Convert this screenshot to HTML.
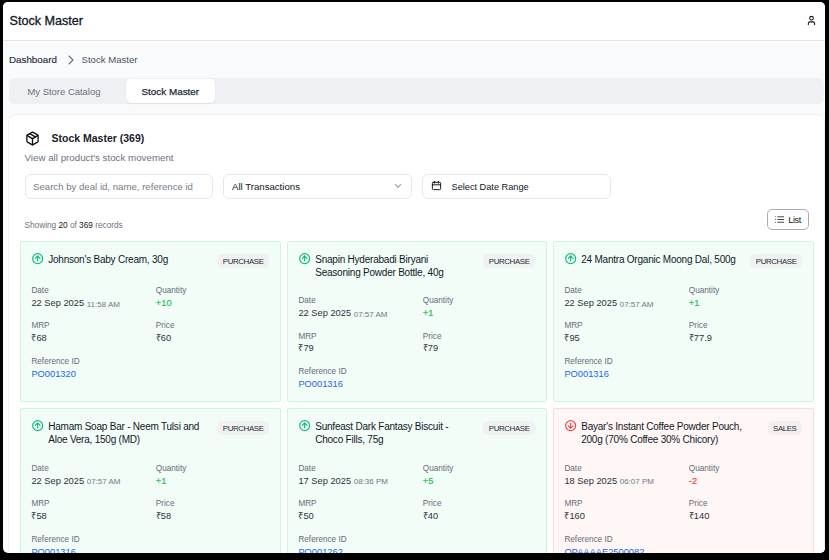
<!DOCTYPE html>
<html><head><meta charset="utf-8">
<style>
*{box-sizing:border-box;margin:0;padding:0}
html,body{width:829px;height:560px;overflow:hidden;background:#000}
body{font-family:"Liberation Sans",sans-serif;color:#111827;position:relative}
.win{position:absolute;left:3px;top:2px;width:822px;height:551px;background:#f8fafc;border-radius:5px;overflow:hidden}
.abs{position:absolute;white-space:nowrap}
svg{display:block}
.hdr{left:0;top:0;width:822px;height:39px;background:#fff;border-bottom:1px solid #e4e6ea}
.med{-webkit-text-stroke:0.3px currentColor}
.tabs{left:6px;top:76px;width:815px;height:26px;background:#eef0f3;border-radius:6px}
.act{left:123px;top:77px;width:89px;height:24px;background:#fff;border-radius:5px;box-shadow:0 1px 1.5px rgba(0,0,0,.07)}
.main{left:6px;top:113px;width:815px;height:460px;background:#fff;border-radius:8px;box-shadow:0 0 0 1px #f0f1f4}
.inp{top:172px;height:25px;border:1px solid #e5e7eb;border-radius:6px;background:#fff}
.card{position:absolute;height:161px;border:1px solid #cdf6e0;background:#f3fdf8;border-radius:2px}
.card.red{border-color:#fcdada;background:#fff6f6}
.card>*{position:absolute;white-space:nowrap}
.ic{left:10.6px;top:10.9px}
.nm{left:27.2px;top:11.4px;font-size:10px;letter-spacing:-.22px;line-height:13px;color:#111827}
.badge{right:11.5px;top:12.2px;height:14px;line-height:15.6px;padding:0 5px 0 5.5px;font-size:7.9px;letter-spacing:-.4px;background:#f0f2f2;border-radius:5px;color:#1f2937}
.red .badge{background:#f4efef}
.lb{font-size:8.2px;line-height:12px;color:#646b78}
.vl{font-size:9.3px;line-height:14px;color:#2b313c}
.tm{font-size:8px;color:#6f7683;position:relative;top:.8px}
.g{color:#1fbf5a;-webkit-text-stroke:.2px currentColor}.r{color:#ef4444;-webkit-text-stroke:.2px currentColor}.bl{color:#2563eb}

</style></head><body>
<div class="win">
  <div class="abs hdr"></div>
  <div class="abs med" style="left:6.5px;top:12px;font-size:12.6px;line-height:14px;color:#111827">Stock Master</div>
  <svg class="abs" style="left:803px;top:13.2px" width="11" height="11" viewBox="0 0 24 24" fill="none" stroke="#111" stroke-width="2.2" stroke-linecap="round" stroke-linejoin="round"><path d="M19 21v-2a4 4 0 0 0-4-4H9a4 4 0 0 0-4 4v2"/><circle cx="12" cy="7" r="4"/></svg>

  <div class="abs med" style="left:6px;top:52px;font-size:9.8px;line-height:12px;color:#1f2937;-webkit-text-stroke-width:.12px">Dashboard</div>
  <svg class="abs" style="left:59.5px;top:49.7px" width="16" height="16" viewBox="0 0 24 24" fill="none" stroke="#6b7280" stroke-width="1.6" stroke-linecap="round" stroke-linejoin="round"><path d="m9 18 6-6-6-6"/></svg>
  <div class="abs" style="left:78.5px;top:52px;font-size:9.6px;line-height:12px;color:#4b5563">Stock Master</div>

  <div class="abs tabs"></div>
  <div class="abs" style="left:24.5px;top:78px;line-height:24px;font-size:9.45px;color:#6b7280">My Store Catalog</div>
  <div class="abs act"></div>
  <div class="abs med" style="left:138.5px;top:78px;line-height:24px;font-size:9.9px;color:#1f2937;-webkit-text-stroke-width:.25px">Stock Master</div>

  <div class="abs main"></div>
  <svg class="abs" style="left:22.2px;top:128.5px" width="15" height="15" viewBox="0 0 24 24" fill="none" stroke="#111" stroke-width="2.1" stroke-linecap="round" stroke-linejoin="round"><path d="M11 21.73a2 2 0 0 0 2 0l7-4A2 2 0 0 0 21 16V8a2 2 0 0 0-1-1.73l-7-4a2 2 0 0 0-2 0l-7 4A2 2 0 0 0 3 8v8a2 2 0 0 0 1 1.73z"/><path d="M12 22V12"/><path d="m3.3 7 7.703 4.734a2 2 0 0 0 1.994 0L20.7 7"/><path d="m7.5 4.27 9 5.15"/></svg>
  <div class="abs" style="left:48.5px;top:129px;font-size:10.5px;line-height:14px;font-weight:bold;color:#1a202c">Stock Master (369)</div>
  <div class="abs" style="left:21.5px;top:149.6px;font-size:9.75px;line-height:12px;color:#6b7280">View all product's stock movement</div>

  <div class="abs inp" style="left:22px;width:188px"></div>
  <div class="abs" style="left:30px;top:173.7px;line-height:22px;font-size:9.63px;color:#767c87">Search by deal id, name, reference id</div>
  <div class="abs inp" style="left:220px;width:189px"></div>
  <div class="abs" style="left:229px;top:173.7px;line-height:22px;font-size:9.63px;color:#111827">All Transactions</div>
  <svg class="abs" style="left:389px;top:177.9px" width="12" height="12" viewBox="0 0 12 12" fill="none" stroke="#9a9ea6" stroke-width="1.1" stroke-linecap="round" stroke-linejoin="round"><path d="M3.4 4.4 6 7.3 8.6 4.4"/></svg>
  <div class="abs inp" style="left:419px;width:189px"></div>
  <svg class="abs" style="left:427.5px;top:177.9px" width="11" height="11" viewBox="0 0 24 24" fill="none" stroke="#111" stroke-width="2.1" stroke-linecap="round" stroke-linejoin="round"><path d="M8 3v4"/><path d="M16 3v4"/><rect width="18" height="16" x="3" y="5" rx="2"/><path d="M3 10.5h18"/></svg>
  <div class="abs" style="left:448.5px;top:173.7px;line-height:22px;font-size:9.2px;color:#111827">Select Date Range</div>

  <div class="abs" style="left:21.5px;top:219.1px;font-size:8.25px;line-height:10px;color:#6b7280">Showing <span style="color:#111827">20</span> of <span style="color:#111827">369</span> records</div>
  <div class="abs" style="left:764px;top:207px;width:42px;height:21px;border:1px solid #a8adb5;border-radius:5px;background:#fff"></div>
  <svg class="abs" style="left:770.5px;top:211.5px" width="11" height="11" viewBox="0 0 24 24" fill="none" stroke="#222" stroke-width="1.8" stroke-linecap="round" stroke-linejoin="round"><path d="M3 12h.01"/><path d="M3 18h.01"/><path d="M3 6h.01"/><path d="M8 12h13"/><path d="M8 18h13"/><path d="M8 6h13"/></svg>
  <div class="abs" style="left:785.2px;top:212.6px;font-size:9px;line-height:10px;letter-spacing:-.3px;color:#111827">List</div>

<div class="card" style="left:17px;top:239px;width:261px">
<svg class="ic" width="12" height="12" viewBox="0.7 0.8 24 24" fill="none" stroke="#10b981" stroke-width="2.3" stroke-linecap="round" stroke-linejoin="round"><circle cx="12" cy="12" r="10"/><path d="m7.2 11.6 4.8-4.8 4.8 4.8"/><path d="M12 16.6V7.2"/></svg>
<div class="nm">Johnson&#39;s Baby Cream, 30g</div>
<div class="badge">PURCHASE</div>
<div class="lb" style="top:42.86px;left:10.4px">Date</div>
<div class="vl" style="top:53.76px;left:10.4px">22 Sep 2025 <span class="tm">11:58 AM</span></div>
<div class="lb" style="top:42.86px;left:134.8px">Quantity</div>
<div class="vl" style="top:53.76px;left:134.8px"><span class="g">+10</span></div>
<div class="lb" style="top:78.36px;left:10.4px">MRP</div>
<div class="vl" style="top:89.26px;left:10.4px">₹68</div>
<div class="lb" style="top:78.36px;left:134.8px">Price</div>
<div class="vl" style="top:89.26px;left:134.8px">₹60</div>
<div class="lb" style="top:113.86px;left:10.4px">Reference ID</div>
<div class="vl" style="top:124.76px;left:10.4px"><span class="bl">PO001320</span></div>
</div>
<div class="card" style="left:284px;top:239px;width:260px">
<svg class="ic" width="12" height="12" viewBox="0.7 0.8 24 24" fill="none" stroke="#10b981" stroke-width="2.3" stroke-linecap="round" stroke-linejoin="round"><circle cx="12" cy="12" r="10"/><path d="m7.2 11.6 4.8-4.8 4.8 4.8"/><path d="M12 16.6V7.2"/></svg>
<div class="nm">Snapin Hyderabadi Biryani<br>Seasoning Powder Bottle, 40g</div>
<div class="badge">PURCHASE</div>
<div class="lb" style="top:53.06px;left:10.4px">Date</div>
<div class="vl" style="top:63.96px;left:10.4px">22 Sep 2025 <span class="tm">07:57 AM</span></div>
<div class="lb" style="top:53.06px;left:134.8px">Quantity</div>
<div class="vl" style="top:63.96px;left:134.8px"><span class="g">+1</span></div>
<div class="lb" style="top:88.56px;left:10.4px">MRP</div>
<div class="vl" style="top:99.46px;left:10.4px">₹79</div>
<div class="lb" style="top:88.56px;left:134.8px">Price</div>
<div class="vl" style="top:99.46px;left:134.8px">₹79</div>
<div class="lb" style="top:124.06px;left:10.4px">Reference ID</div>
<div class="vl" style="top:134.96px;left:10.4px"><span class="bl">PO001316</span></div>
</div>
<div class="card" style="left:550px;top:239px;width:261px">
<svg class="ic" width="12" height="12" viewBox="0.7 0.8 24 24" fill="none" stroke="#10b981" stroke-width="2.3" stroke-linecap="round" stroke-linejoin="round"><circle cx="12" cy="12" r="10"/><path d="m7.2 11.6 4.8-4.8 4.8 4.8"/><path d="M12 16.6V7.2"/></svg>
<div class="nm">24 Mantra Organic Moong Dal, 500g</div>
<div class="badge">PURCHASE</div>
<div class="lb" style="top:42.86px;left:10.4px">Date</div>
<div class="vl" style="top:53.76px;left:10.4px">22 Sep 2025 <span class="tm">07:57 AM</span></div>
<div class="lb" style="top:42.86px;left:134.8px">Quantity</div>
<div class="vl" style="top:53.76px;left:134.8px"><span class="g">+1</span></div>
<div class="lb" style="top:78.36px;left:10.4px">MRP</div>
<div class="vl" style="top:89.26px;left:10.4px">₹95</div>
<div class="lb" style="top:78.36px;left:134.8px">Price</div>
<div class="vl" style="top:89.26px;left:134.8px">₹77.9</div>
<div class="lb" style="top:113.86px;left:10.4px">Reference ID</div>
<div class="vl" style="top:124.76px;left:10.4px"><span class="bl">PO001316</span></div>
</div>
<div class="card" style="left:17px;top:406px;width:261px">
<svg class="ic" width="12" height="12" viewBox="0.7 0.8 24 24" fill="none" stroke="#10b981" stroke-width="2.3" stroke-linecap="round" stroke-linejoin="round"><circle cx="12" cy="12" r="10"/><path d="m7.2 11.6 4.8-4.8 4.8 4.8"/><path d="M12 16.6V7.2"/></svg>
<div class="nm">Hamam Soap Bar - Neem Tulsi and<br>Aloe Vera, 150g (MD)</div>
<div class="badge">PURCHASE</div>
<div class="lb" style="top:53.76px;left:10.4px">Date</div>
<div class="vl" style="top:64.66px;left:10.4px">22 Sep 2025 <span class="tm">07:57 AM</span></div>
<div class="lb" style="top:53.76px;left:134.8px">Quantity</div>
<div class="vl" style="top:64.66px;left:134.8px"><span class="g">+1</span></div>
<div class="lb" style="top:89.26px;left:10.4px">MRP</div>
<div class="vl" style="top:100.16px;left:10.4px">₹58</div>
<div class="lb" style="top:89.26px;left:134.8px">Price</div>
<div class="vl" style="top:100.16px;left:134.8px">₹58</div>
<div class="lb" style="top:124.76px;left:10.4px">Reference ID</div>
<div class="vl" style="top:135.66px;left:10.4px"><span class="bl">PO001316</span></div>
</div>
<div class="card" style="left:284px;top:406px;width:260px">
<svg class="ic" width="12" height="12" viewBox="0.7 0.8 24 24" fill="none" stroke="#10b981" stroke-width="2.3" stroke-linecap="round" stroke-linejoin="round"><circle cx="12" cy="12" r="10"/><path d="m7.2 11.6 4.8-4.8 4.8 4.8"/><path d="M12 16.6V7.2"/></svg>
<div class="nm">Sunfeast Dark Fantasy Biscuit -<br>Choco Fills, 75g</div>
<div class="badge">PURCHASE</div>
<div class="lb" style="top:53.76px;left:10.4px">Date</div>
<div class="vl" style="top:64.66px;left:10.4px">17 Sep 2025 <span class="tm">08:36 PM</span></div>
<div class="lb" style="top:53.76px;left:134.8px">Quantity</div>
<div class="vl" style="top:64.66px;left:134.8px"><span class="g">+5</span></div>
<div class="lb" style="top:89.26px;left:10.4px">MRP</div>
<div class="vl" style="top:100.16px;left:10.4px">₹50</div>
<div class="lb" style="top:89.26px;left:134.8px">Price</div>
<div class="vl" style="top:100.16px;left:134.8px">₹40</div>
<div class="lb" style="top:124.76px;left:10.4px">Reference ID</div>
<div class="vl" style="top:135.66px;left:10.4px"><span class="bl">PO001262</span></div>
</div>
<div class="card red" style="left:550px;top:406px;width:261px">
<svg class="ic" width="12" height="12" viewBox="0.7 0.8 24 24" fill="none" stroke="#ef4444" stroke-width="2.3" stroke-linecap="round" stroke-linejoin="round"><circle cx="12" cy="12" r="10"/><path d="M12 7.4V16.8"/><path d="m7.2 12.4 4.8 4.8 4.8-4.8"/></svg>
<div class="nm">Bayar&#39;s Instant Coffee Powder Pouch,<br>200g (70% Coffee 30% Chicory)</div>
<div class="badge">SALES</div>
<div class="lb" style="top:53.76px;left:10.4px">Date</div>
<div class="vl" style="top:64.66px;left:10.4px">18 Sep 2025 <span class="tm">06:07 PM</span></div>
<div class="lb" style="top:53.76px;left:134.8px">Quantity</div>
<div class="vl" style="top:64.66px;left:134.8px"><span class="r">-2</span></div>
<div class="lb" style="top:89.26px;left:10.4px">MRP</div>
<div class="vl" style="top:100.16px;left:10.4px">₹160</div>
<div class="lb" style="top:89.26px;left:134.8px">Price</div>
<div class="vl" style="top:100.16px;left:134.8px">₹140</div>
<div class="lb" style="top:124.76px;left:10.4px">Reference ID</div>
<div class="vl" style="top:135.66px;left:10.4px"><span class="bl">OPAAAAE2500082</span></div>
</div>
</div>

</body></html>
